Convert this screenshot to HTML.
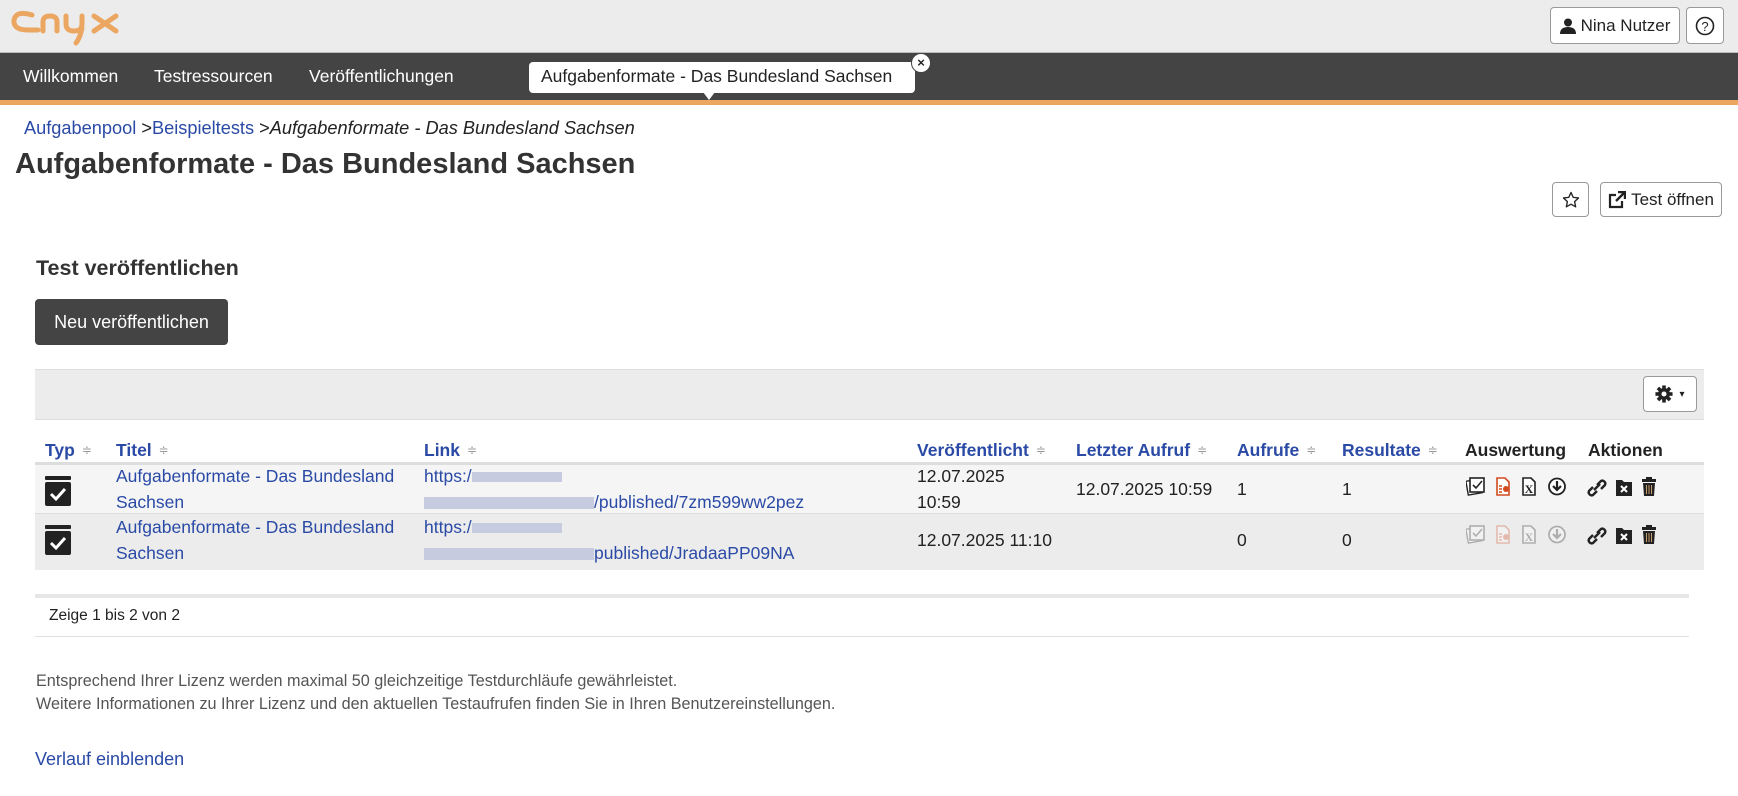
<!DOCTYPE html>
<html><head><meta charset="utf-8">
<style>
*{box-sizing:border-box;margin:0;padding:0}
body{width:1738px;height:796px;overflow:hidden;background:#fff;font-family:"Liberation Sans",Arial,sans-serif;color:#222;position:relative}
.a{position:absolute;white-space:nowrap}
.top{left:0;top:0;width:1738px;height:53px;background:#ececec;border-bottom:1px solid #bbb}
.nav{left:0;top:53px;width:1738px;height:47px;background:#444}
.org{left:0;top:100px;width:1738px;height:5px;background:#eba661}
.nv{color:#fff;font-size:17.5px;top:66px}
.btn{border:1px solid #999;border-radius:4px;background:#fff;font-size:17px;color:#222;display:flex;align-items:center;justify-content:center}
.lnk{color:#2a4aa6}
.th{top:440px;font-size:17.5px;font-weight:bold;color:#2a4aa6}
.th.k{color:#222}
.srt{font-weight:normal;color:#999;font-size:12px;margin-left:7px;vertical-align:2px}
.td{font-size:17.5px;line-height:26px}
.ic{position:absolute}
</style></head><body>
<div class="a top"></div>
<svg class="a" style="left:10px;top:6px" width="112" height="40" viewBox="0 0 112 40">
<g fill="none" stroke="#eba661" stroke-width="5" stroke-linecap="round">
<path d="M22 9 Q6 4 4 14 Q3 24 18 24 L28 24"/>
<path d="M33 25 L33 16 Q33 10 40 10 Q47 10 47 16 L47 25"/>
<path d="M56 10 L56 18 Q56 25 64 25 Q72 25 72 18 L72 10 M72 22 Q70 32 66 37"/>
<path d="M84 10 L106 25 M106 10 L84 25"/>
</g></svg>
<div class="a btn" style="left:1550px;top:7px;width:130px;height:37px"><svg width="16" height="16" viewBox="0 0 16 16" style="margin-right:5px"><circle cx="8" cy="4.5" r="4" fill="#222"/><path d="M0 16 Q0 9 8 9 Q16 9 16 16Z" fill="#222"/></svg>Nina Nutzer</div>
<div class="a btn" style="left:1686px;top:7px;width:38px;height:37px"><svg width="20" height="20" viewBox="0 0 20 20"><circle cx="10" cy="10" r="8.5" fill="none" stroke="#222" stroke-width="1.6"/><text x="10" y="15" text-anchor="middle" font-size="13" font-family="Liberation Sans" fill="#222">?</text></svg></div>
<div class="a nav"></div>
<div class="a org"></div>
<div class="a nv" style="left:23px">Willkommen</div>
<div class="a nv" style="left:154px">Testressourcen</div>
<div class="a nv" style="left:309px">Veröffentlichungen</div>
<div class="a" style="left:529px;top:62px;width:386px;height:31px;background:#fff;border-radius:4px;font-size:17.5px;color:#222;padding:4px 0 0 12px">Aufgabenformate - Das Bundesland Sachsen</div>
<div class="a" style="left:703px;top:92px;width:0;height:0;border-left:6px solid transparent;border-right:6px solid transparent;border-top:8px solid #fff"></div>
<div class="a" style="left:911px;top:53px;width:20px;height:20px;border-radius:50%;background:#fff;border:1px solid #444;font-size:13px;font-weight:bold;text-align:center;line-height:17px;color:#222">×</div>
<div class="a" style="left:24px;top:118px;font-size:18.2px"><span class="lnk">Aufgabenpool</span> &gt;<span class="lnk">Beispieltests</span> &gt;<i>Aufgabenformate - Das Bundesland Sachsen</i></div>
<div class="a" style="left:15px;top:148px;font-size:29px;font-weight:bold;color:#333">Aufgabenformate - Das Bundesland Sachsen</div>
<div class="a btn" style="left:1552px;top:182px;width:37px;height:35px"><svg width="18" height="18" viewBox="0 0 24 24"><path d="M12 2l3 6.5 7 .8-5.2 4.8 1.4 7L12 17.6 5.8 21.1l1.4-7L2 9.3l7-.8z" fill="none" stroke="#222" stroke-width="1.8" stroke-linejoin="round"/></svg></div>
<div class="a btn" style="left:1600px;top:182px;width:122px;height:35px"><svg width="18" height="18" viewBox="0 0 18 18" style="margin-right:5px"><path d="M14 10v6H2V4h6" fill="none" stroke="#222" stroke-width="2.2"/><path d="M10 1h7v7M17 1L8 10" fill="none" stroke="#222" stroke-width="2.4"/></svg>Test öffnen</div>
<div class="a" style="left:36px;top:256px;font-size:21.5px;font-weight:bold;color:#333">Test veröffentlichen</div>
<div class="a" style="left:35px;top:299px;width:193px;height:46px;background:#444;border-radius:4px;color:#fff;font-size:18px;line-height:46px;text-align:center">Neu veröffentlichen</div>
<div class="a" style="left:35px;top:369px;width:1669px;height:51px;background:#ececec;border-top:1px solid #ddd;border-bottom:1px solid #ddd"></div>
<div class="a btn" style="left:1643px;top:376px;width:54px;height:36px;font-size:10px"><svg width="18" height="18" viewBox="0 0 20 20"><g fill="#222"><circle cx="10" cy="10" r="6.5"/><rect x="8" y="0.5" width="4" height="19"/><rect x="0.5" y="8" width="19" height="4"/><rect x="8" y="0.5" width="4" height="19" transform="rotate(45 10 10)"/><rect x="8" y="0.5" width="4" height="19" transform="rotate(-45 10 10)"/></g><circle cx="10" cy="10" r="2.8" fill="#fff"/></svg><span style="margin-left:6px">▾</span></div>
<div class="a th" style="left:45px">Typ<span class="srt">≑</span></div>
<div class="a th" style="left:116px">Titel<span class="srt">≑</span></div>
<div class="a th" style="left:424px">Link<span class="srt">≑</span></div>
<div class="a th" style="left:917px">Veröffentlicht<span class="srt">≑</span></div>
<div class="a th" style="left:1076px">Letzter Aufruf<span class="srt">≑</span></div>
<div class="a th" style="left:1237px">Aufrufe<span class="srt">≑</span></div>
<div class="a th" style="left:1342px">Resultate<span class="srt">≑</span></div>
<div class="a th k" style="left:1465px">Auswertung</div>
<div class="a th k" style="left:1588px">Aktionen</div>
<div class="a" style="left:35px;top:462px;width:1669px;height:52px;background:#f5f5f5;border-top:3px solid #ddd;border-bottom:1px solid #ddd"></div>
<div class="a" style="left:35px;top:514px;width:1669px;height:56px;background:#ececec"></div>
<svg class="a" style="left:45px;top:476px" width="26" height="30" viewBox="0 0 26 30"><rect x="0" y="0" width="26" height="4" rx="1" fill="#222"/><rect x="0" y="6" width="26" height="24" rx="2" fill="#222"/><path d="M6 18l5 5 9-10" fill="none" stroke="#fff" stroke-width="3"/></svg>
<div class="a td lnk" style="left:116px;top:463px">Aufgabenformate - Das Bundesland<br>Sachsen</div>
<div class="a td lnk" style="left:424px;top:463px">https:/<span style="display:inline-block;width:90px;height:10px;background:#c6cbe0"></span><br><span style="display:inline-block;width:170px;height:12px;background:#c6cbe0;vertical-align:-1px"></span>/published/7zm599ww2pez</div>
<div class="a td" style="left:917px;top:463px">12.07.2025<br>10:59</div>
<div class="a td" style="left:1076px;top:476px">12.07.2025 10:59</div>
<div class="a td" style="left:1237px;top:476px">1</div>
<div class="a td" style="left:1342px;top:476px">1</div>
<svg class="a" style="left:45px;top:525px" width="26" height="30" viewBox="0 0 26 30"><rect x="0" y="0" width="26" height="4" rx="1" fill="#222"/><rect x="0" y="6" width="26" height="24" rx="2" fill="#222"/><path d="M6 18l5 5 9-10" fill="none" stroke="#fff" stroke-width="3"/></svg>
<div class="a td lnk" style="left:116px;top:514px">Aufgabenformate - Das Bundesland<br>Sachsen</div>
<div class="a td lnk" style="left:424px;top:514px">https:/<span style="display:inline-block;width:90px;height:10px;background:#c6cbe0"></span><br><span style="display:inline-block;width:170px;height:12px;background:#c6cbe0;vertical-align:-1px"></span>published/JradaaPP09NA</div>
<div class="a td" style="left:917px;top:527px">12.07.2025 11:10</div>
<div class="a td" style="left:1237px;top:527px">0</div>
<div class="a td" style="left:1342px;top:527px">0</div>
<svg class="a" style="left:1466px;top:477px" width="200" height="70" viewBox="0 0 200 70">
<defs>
<g id="ev">
<rect x="1" y="3" width="14" height="14" fill="#fff" stroke="#222" stroke-width="1.4" transform="rotate(-10 8 10)"/>
<rect x="4" y="1" width="14" height="14" fill="#fff" stroke="#222" stroke-width="1.6"/>
<path d="M7 8l3 3 6-7" fill="none" stroke="#222" stroke-width="1.6"/>
<path d="M31 1h8l4 4v13H31z" fill="#fff" stroke="#d24a1e" stroke-width="1.6"/>
<path d="M33 9h3M33 12h3M33 15h3" stroke="#d24a1e" stroke-width="1.4"/><circle cx="40" cy="12" r="3" fill="#d24a1e"/>
<path d="M57 1h8l4 4v13H57z" fill="#fff" stroke="#222" stroke-width="1.6"/>
<text x="63" y="16" text-anchor="middle" font-size="12" font-weight="bold" font-family="Liberation Serif" fill="#222">X</text>
<circle cx="91" cy="9.5" r="8" fill="#fff" stroke="#222" stroke-width="1.8"/>
<path d="M91 4v8M87 9l4 4 4-4" fill="none" stroke="#222" stroke-width="2.2"/>
</g>
<g id="ac">
<path d="M127 10l-4 4a3 3 0 0 0 4 4l4-4M131 8l4-4a3 3 0 0 1 4 4l-4 4M128 13l6-6" fill="none" stroke="#222" stroke-width="2.4"/>
<path d="M150 3h6l2 2h8v14h-16z" fill="#222"/><path d="M155 9l6 6M161 9l-6 6" stroke="#fff" stroke-width="2"/>
<rect x="176" y="2" width="14" height="3" fill="#222"/><rect x="180" y="0" width="6" height="3" fill="#222"/><path d="M177 6h12l-1 13h-10z" fill="#222"/><path d="M180.5 8v9M183 8v9M185.5 8v9" stroke="#c79a6a" stroke-width="1"/>
</g></defs>
<use href="#ev"/><use href="#ac"/>
<g opacity="0.3" transform="translate(0,48)"><use href="#ev"/></g>
<g transform="translate(0,48)"><use href="#ac"/></g>
</svg>
<div class="a" style="left:35px;top:594px;width:1654px;height:4px;background:#e6e6e6"></div>
<div class="a" style="left:49px;top:607px;font-size:15.5px;color:#222">Zeige 1 bis 2 von 2</div>
<div class="a" style="left:35px;top:636px;width:1654px;height:1px;background:#e0e0e0"></div>
<div class="a" style="left:36px;top:670px;font-size:16.2px;color:#555;line-height:22.5px">Entsprechend Ihrer Lizenz werden maximal 50 gleichzeitige Testdurchläufe gewährleistet.<br>Weitere Informationen zu Ihrer Lizenz und den aktuellen Testaufrufen finden Sie in Ihren Benutzereinstellungen.</div>
<div class="a lnk" style="left:35px;top:749px;font-size:18px">Verlauf einblenden</div>
</body></html>
